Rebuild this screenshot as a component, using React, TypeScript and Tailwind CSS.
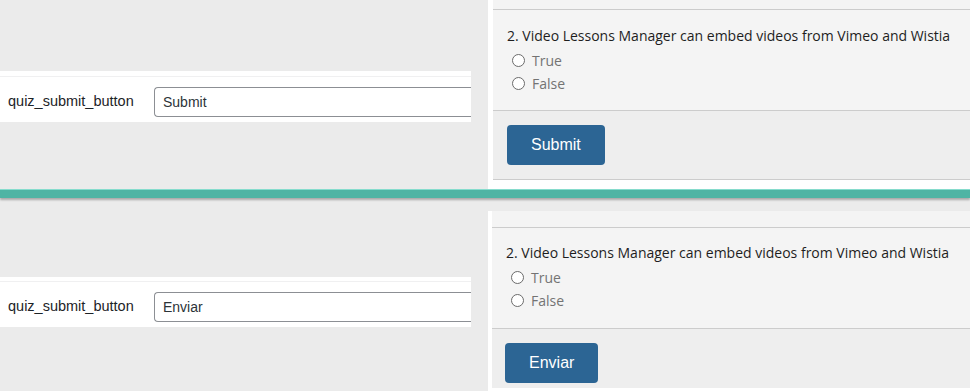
import React from 'react';

const adminFont = { fontFamily: '"Liberation Sans", Arial, sans-serif' };
const quizFont = { fontFamily: '"Open Sans", "Liberation Sans", sans-serif' };

function SettingRow({ value, top, gap }: { value: string; top: string; gap: string }) {
  return (
    <div className={`w-[488px] shrink-0 ${top}`}>
      <div className={`w-[471px] bg-white ${gap}`}>
        <div className="flex h-[46px] items-start border-t border-[#f0f0f1] pt-[10px]" style={adminFont}>
          <span className="flex h-[30px] w-[154px] items-center pl-[8px] text-[14.5px] text-[#1d2327]">
            quiz_submit_button
          </span>
          <div className="flex h-[30px] flex-1 items-center rounded-l-[4px] border-y border-l border-[#8c8f94] pl-[8px] text-[14px] text-[#2c3338]">
            {value}
          </div>
        </div>
      </div>
    </div>
  );
}

function Radio({ label }: { label: string }) {
  return (
    <div className="flex h-[23px] items-center pl-[5px]">
      <span className="h-[13px] w-[13px] rounded-full border border-[#6b6b6b] bg-white" />
      <span className="ml-[7px] text-[14px] text-[#737373]">{label}</span>
    </div>
  );
}

function Question() {
  return (
    <div className="px-[14px]" style={quizFont}>
      <div className="text-[14px] leading-[20px] text-[#1e1e1e]">
        2. Video Lessons Manager can embed videos from Vimeo and Wistia
      </div>
      <div className="mt-[3px]">
        <Radio label="True" />
        <Radio label="False" />
      </div>
    </div>
  );
}

function SubmitButton({ label }: { label: string }) {
  return (
    <button
      type="button"
      className="h-[40px] rounded-[4px] bg-[#2c6594] px-[24px] text-[16px] text-white"
      style={adminFont}
    >
      {label}
    </button>
  );
}

export default function App() {
  return (
    <div className="flex h-[391px] w-[970px] flex-col overflow-hidden bg-[#ebebeb]">
      {/* English */}
      <div className="flex h-[189px] shrink-0">
        <SettingRow value="Submit" top="pt-[71px]" gap="pt-[5px]" />
        <div className="flex flex-1 flex-col bg-white pl-[5px]">
          <div className="h-[9px] bg-[#f4f4f4]" />
          <div className="h-[101px] border-t border-[#cccccc] bg-[#f4f4f4] pt-[16px]">
            <Question />
          </div>
          <div className="h-[70px] border-y border-[#cccccc] bg-[#eeeeee] px-[14px] pt-[14px]">
            <SubmitButton label="Submit" />
          </div>
        </div>
      </div>

      {/* divider */}
      <div className="h-[12px] shrink-0">
        <div className="h-[9px] border-t border-[#86dccd] bg-[#4fb4a4] shadow-[0_2px_2px_rgba(0,0,0,0.28)]" />
      </div>

      {/* Spanish */}
      <div className="flex flex-1">
        <SettingRow value="Enviar" top="pt-[76px]" gap="pt-[4px]" />
        <div className="mt-[10px] flex flex-1 flex-col bg-white pl-[4px]">
          <div className="h-[16px] bg-[#f4f4f4]" />
          <div className="h-[101px] border-t border-[#cccccc] bg-[#f4f4f4] pt-[15px]">
            <Question />
          </div>
          <div className="h-[60px] border-t border-[#cccccc] bg-[#eeeeee] px-[13px] pt-[14px]">
            <SubmitButton label="Enviar" />
          </div>
        </div>
      </div>
    </div>
  );
}
